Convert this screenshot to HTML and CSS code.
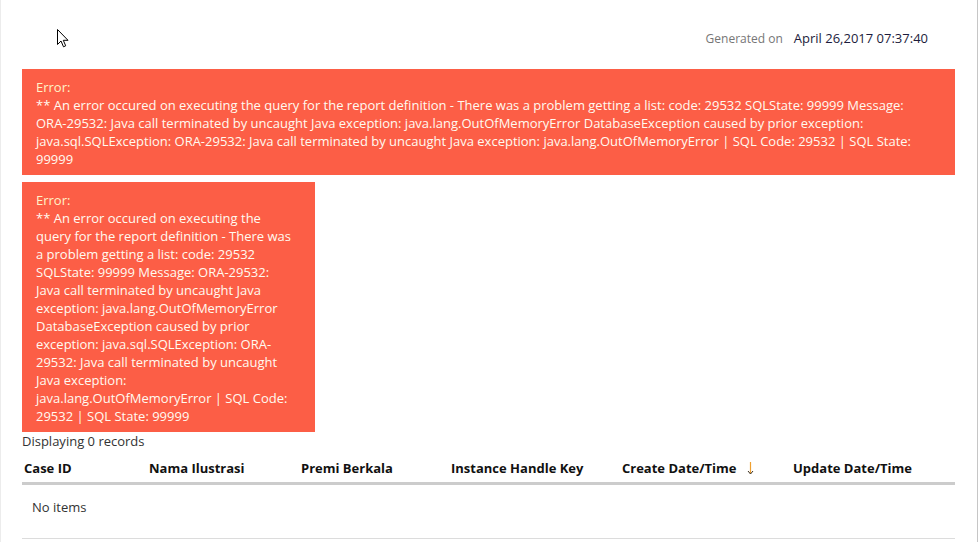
FILE: index.html
```html
<!DOCTYPE html>
<html>
<head>
<meta charset="utf-8">
<link rel="stylesheet" href="styles.css">
</head>
<body>
<div class="frame">
  <div class="header">
    <span class="gen-label">Generated on</span>
    <span class="gen-date">April 26,2017 07:37:40</span>
  </div>
  <div class="error error-wide">
    <div class="err-title">Error:</div>
    <div>** An error occured on executing the query for the report definition - There was a problem getting a list: code: 29532 SQLState: 99999 Message: ORA-29532: Java call terminated by uncaught Java exception: java.lang.OutOfMemoryError DatabaseException caused by prior exception: java.sql.SQLException: ORA-29532: Java call terminated by uncaught Java exception: java.lang.OutOfMemoryError | SQL Code: 29532 | SQL State: 99999</div>
  </div>
  <div class="error error-narrow">
    <div class="err-title">Error:</div>
    <div>** An error occured on executing the query for the report definition - There was a problem getting a list: code: 29532 SQLState: 99999 Message: ORA-29532: Java call terminated by uncaught Java exception: java.lang.OutOfMemoryError DatabaseException caused by prior exception: java.sql.SQLException: ORA-29532: Java call terminated by uncaught Java exception: java.lang.OutOfMemoryError | SQL Code: 29532 | SQL State: 99999</div>
  </div>
  <div class="count">Displaying 0 records</div>
  <div class="grid">
    <div class="grid-head">
      <div class="th">Case ID</div>
      <div class="th">Nama Ilustrasi</div>
      <div class="th">Premi Berkala</div>
      <div class="th">Instance Handle Key</div>
      <div class="th sorted">Create Date/Time
        <svg class="sort-arrow" width="7" height="14" viewBox="0 0 7 14"><path d="M3.5 1 V12.5" stroke="#f0a030" stroke-width="1.2" fill="none"/><path d="M1 10 L3.5 13 L6 10" stroke="#3a3020" stroke-width="1" fill="none"/></svg>
      </div>
      <div class="th">Update Date/Time</div>
    </div>
    <div class="empty">No items</div>
  </div>
  <svg class="cursor" width="12" height="19" viewBox="0 0 12 19"><path d="M0.5 0.5 L0.5 15.5 L4 12 L6.5 17.8 L8.7 16.8 L6.3 11.3 L11 11.3 Z" fill="#fff" stroke="#000" stroke-width="1" stroke-linejoin="miter"/></svg>
</div>
</body>
</html>
```

FILE: styles.css
```css
html, body {
  margin: 0;
  padding: 0;
  background: #fff;
}
body {
  font-family: "Open Sans", "Noto Sans", sans-serif;
  font-size: 13px;
  color: #333;
}
.frame {
  position: relative;
  width: 978px;
  height: 542px;
  box-sizing: border-box;
  border-left: 1px solid #ececec;
  border-right: 1px solid #c6c6c6;
  padding: 0 22px 0 21px;
  overflow: hidden;
}
.header {
  display: flex;
  justify-content: flex-end;
  align-items: baseline;
  height: 69px;
  padding-top: 29px;
  box-sizing: border-box;
  padding-right: 27px;
}
.gen-label {
  font-size: 12px;
  color: #767676;
  margin-right: 11px;
}
.gen-date {
  font-size: 13px;
  color: #1c1c3c;
}
.error {
  background: #fc5e46;
  color: #fffaf0;
  line-height: 18px;
  padding: 9px 21px 7px 14px;
  box-sizing: border-box;
}
.err-title {
  color: #fff3c8;
}
.error-wide {
  width: 933px;
  margin-bottom: 7px;
}
.error-narrow {
  width: 293px;
}
.count {
  line-height: 18px;
  color: #333;
  padding-top: 0;
}
.grid {
  width: 933px;
}
.grid-head {
  display: grid;
  grid-template-columns: 125px 152px 150px 171px 171px 1fr;
  border-bottom: 3px solid #cccccc;
  padding: 9px 0 5px 0;
}
.th {
  font-weight: 700;
  color: #111;
  padding-left: 2px;
  line-height: 18px;
  white-space: nowrap;
}
.sorted {
  display: flex;
  align-items: center;
}
.sort-arrow {
  margin-left: 10px;
}
.empty {
  padding: 13px 10px 14px 10px;
  line-height: 18px;
  color: #333;
  height: 54px;
  box-sizing: border-box;
  border-bottom: 1px solid #dcdcdc;
}
.cursor {
  position: absolute;
  left: 56px;
  top: 29px;
}
```
